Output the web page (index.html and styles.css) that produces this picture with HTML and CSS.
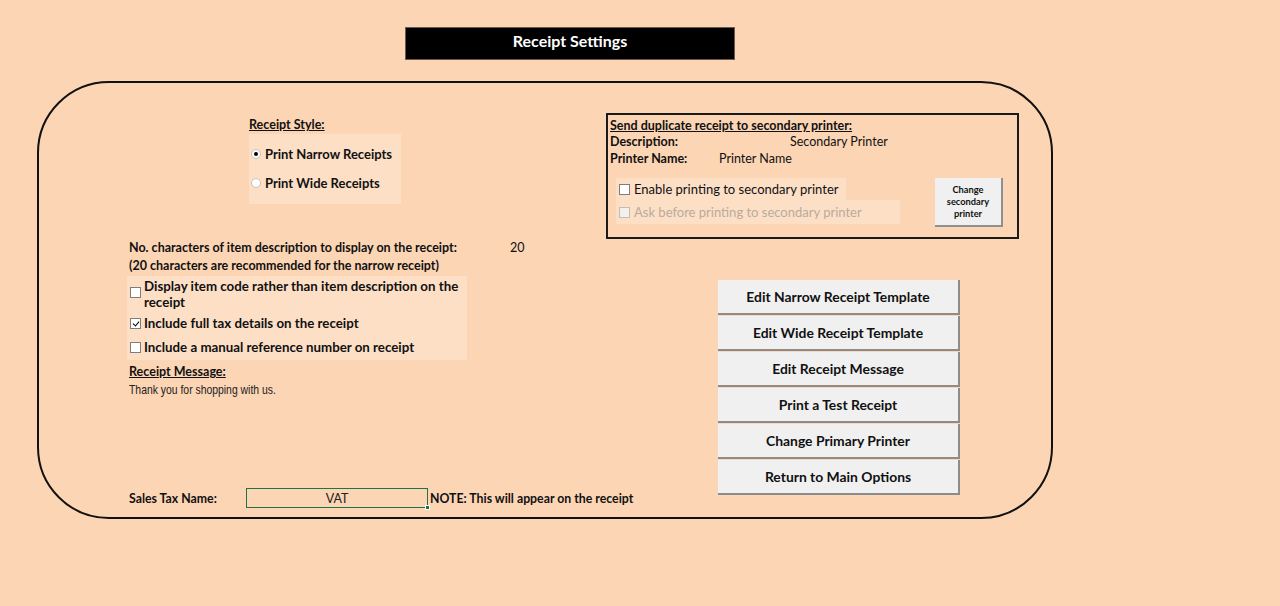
FILE: index.html
```html
<!DOCTYPE html>
<html lang="en">
<head>
<meta charset="utf-8">
<title>Receipt Settings</title>
<link rel="stylesheet" href="styles.css">
</head>
<body>
<div class="sheet">
  <div class="title-bar">Receipt Settings</div>

  <div class="panel">
    <div class="col-left">
      <div class="style-block">
        <div class="heading">Receipt Style:</div>
        <div class="radio-group">
          <label class="radio-row"><span class="radio on"></span>Print Narrow Receipts</label>
          <label class="radio-row"><span class="radio"></span>Print Wide Receipts</label>
        </div>
      </div>

      <div class="desc-block">
        <div class="desc-row">
          <span class="strong">No. characters of item description to display on the receipt:</span>
          <span class="desc-value">20</span>
        </div>
        <div class="strong">(20 characters are recommended for the narrow receipt)</div>
      </div>

      <div class="options">
        <label class="opt"><span class="box"></span><span class="opt-text">Display item code rather than item description on the receipt</span></label>
        <label class="opt"><span class="box checked"></span><span class="opt-text">Include full tax details on the receipt</span></label>
        <label class="opt"><span class="box"></span><span class="opt-text">Include a manual reference number on receipt</span></label>
      </div>

      <div class="heading msg-heading">Receipt Message:</div>
      <div class="msg-text">Thank you for shopping with us.</div>

      <div class="tax-row">
        <span class="tax-label">Sales Tax Name:</span>
        <span class="tax-cell">VAT<span class="handle"></span></span>
        <span class="tax-note">NOTE: This will appear on the receipt</span>
      </div>
    </div>

    <div class="col-right">
      <div class="secondary">
        <div class="heading">Send duplicate receipt to secondary printer:</div>
        <div class="sec-row"><span class="sec-label">Description:</span><span class="sec-desc">Secondary Printer</span></div>
        <div class="sec-row"><span class="sec-label">Printer Name:</span><span class="sec-name">Printer Name</span></div>
        <div class="sec-bottom">
          <div class="sec-checks">
            <label class="sec-check enable"><span class="box"></span>Enable printing to secondary printer</label>
            <label class="sec-check ask"><span class="box disabled"></span>Ask before printing to secondary printer</label>
          </div>
          <button class="small-btn">Change<br>secondary<br>printer</button>
        </div>
      </div>

      <div class="btn-stack">
        <button class="btn">Edit Narrow Receipt Template</button>
        <button class="btn">Edit Wide Receipt Template</button>
        <button class="btn">Edit Receipt Message</button>
        <button class="btn">Print a Test Receipt</button>
        <button class="btn">Change Primary Printer</button>
        <button class="btn">Return to Main Options</button>
      </div>
    </div>
  </div>
</div>
</body>
</html>
```
FILE: styles.css
```css
* { box-sizing: border-box; }

html, body {
  margin: 0;
  padding: 0;
  background: #fcd5b4;
}

body {
  font-family: Lato, "Open Sans", sans-serif;
  color: #111;
  font-size: 12.5px;
  width: 1280px;
  height: 606px;
  overflow: hidden;
}

.sheet {
  padding-top: 27px;
}

.title-bar {
  margin-left: 405px;
  width: 330px;
  height: 33px;
  padding-bottom: 6px;
  background: #000;
  color: #fff;
  font-weight: 700;
  font-size: 16px;
  display: flex;
  align-items: center;
  justify-content: center;
  border: 1px solid #6b5a4d;
}

.panel {
  margin-top: 21px;
  margin-left: 37px;
  width: 1016px;
  height: 438px;
  border: 2px solid #111;
  border-radius: 72px;
  display: flex;
}

/* left column */
.col-left {
  width: 567px;
  padding-left: 88px;
  display: flex;
  flex-direction: column;
}

.heading {
  font-weight: 700;
  text-decoration: underline;
  font-size: 12.5px;
  line-height: 14px;
}

.style-block {
  margin-left: 122px;
  margin-top: 35px;
}

.radio-group {
  margin-top: 2px;
  width: 152px;
  height: 70px;
  background: #fddfc6;
  padding-top: 12px;
  display: flex;
  flex-direction: column;
  gap: 13px;
}

.radio-row {
  display: flex;
  align-items: center;
  font-weight: 700;
  font-size: 13px;
  line-height: 16px;
  padding-left: 2px;
}

.radio {
  width: 10px;
  height: 10px;
  border-radius: 50%;
  background: #fff;
  border: 1px solid #c9c0b8;
  margin-right: 4px;
  position: relative;
  flex: none;
}

.radio.on::after {
  content: "";
  position: absolute;
  left: 2px;
  top: 2px;
  width: 4px;
  height: 4px;
  border-radius: 50%;
  background: #000;
}

.desc-block {
  margin-top: 35px;
  font-size: 12.5px;
  line-height: 18px;
}

.strong { font-weight: 700; }

.desc-row {
  display: flex;
  padding-left: 2px;
}

.desc-block > .strong { padding-left: 2px; }

.desc-value {
  margin-left: 53px;
  font-weight: 400;
}

.options {
  margin-top: 1px;
  width: 340px;
  height: 84px;
  background: #fddfc6;
  padding-top: 2px;
  display: flex;
  flex-direction: column;
}

.opt {
  display: flex;
  align-items: flex-start;
  font-weight: 700;
  font-size: 13.3px;
  line-height: 16px;
  padding-left: 3px;
}

.opt:nth-child(1) { height: 37px; }
.opt:nth-child(2) { height: 24px; }

.opt .box { margin-top: 3px; }
.opt:nth-child(1) .box { margin-top: 9px; }

.opt-text {
  width: 318px;
}

.box {
  width: 11px;
  height: 11px;
  background: #fff;
  border: 1px solid #7d7d7d;
  margin-right: 3px;
  flex: none;
  position: relative;
}

.box.checked::after {
  content: "";
  position: absolute;
  left: 3px;
  top: 1px;
  width: 3px;
  height: 5px;
  border: solid #000;
  border-width: 0 1.5px 1.5px 0;
  transform: rotate(40deg);
}

.box.disabled {
  background: #f2efec;
  border-color: #c3bdb7;
}

.msg-heading {
  margin-top: 5px;
  margin-left: 2px;
}

.msg-text {
  margin-top: 3px;
  margin-left: 2px;
  font-family: "Liberation Sans", Arial, sans-serif;
  font-size: 13px;
  color: #222;
  transform: scaleX(0.8);
  transform-origin: left center;
  white-space: nowrap;
}

.tax-row {
  margin-top: auto;
  margin-bottom: 9px;
  display: flex;
  align-items: center;
  font-size: 12.3px;
  white-space: nowrap;
}

.tax-label {
  font-weight: 700;
  width: 119px;
  padding-left: 2px;
  flex: none;
}

.tax-cell {
  width: 182px;
  height: 20px;
  border: 1.5px solid #217346;
  display: flex;
  align-items: center;
  justify-content: center;
  font-size: 12.5px;
  position: relative;
  color: #222;
  flex: none;
}

.handle {
  position: absolute;
  right: -3px;
  bottom: -3px;
  width: 5px;
  height: 5px;
  background: #217346;
  border: 1px solid #fff;
}

.tax-note {
  font-weight: 700;
  margin-left: 2px;
}

/* right column */
.col-right {
  flex: 1;
  display: flex;
  flex-direction: column;
}

.secondary {
  margin-top: 30px;
  width: 413px;
  height: 126px;
  border: 2px solid #1a1a1a;
  padding: 4px 0 0 2px;
  font-size: 12.5px;
}

.sec-row {
  display: flex;
  line-height: 17px;
}

.sec-label {
  font-weight: 700;
}

.sec-row:nth-of-type(2) .sec-label { width: 180px; }
.sec-row:nth-of-type(3) .sec-label { width: 109px; }

.sec-bottom {
  display: flex;
  margin-top: 11px;
  padding-left: 6px;
}

.sec-checks {
  display: flex;
  flex-direction: column;
}

.sec-check {
  display: flex;
  align-items: center;
  font-size: 13px;
  background: #fddfc6;
  height: 22px;
  padding-left: 3px;
}

.sec-check .box { margin-right: 4px; }

.sec-check.enable { width: 230px; }
.sec-check.ask { width: 284px; color: #b8ab9f; height: 24px; }

.small-btn {
  margin-left: 35px;
  width: 68px;
  height: 49px;
  font-family: Lato, sans-serif;
  font-weight: 700;
  font-size: 9.3px;
  line-height: 12px;
  color: #111;
  background: #f0f0f0;
  border: none;
  border-right: 2px solid #8f8f8f;
  border-bottom: 2px solid #8f8f8f;
  padding: 0;
}

.btn-stack {
  margin-top: 41px;
  margin-left: 112px;
  width: 242px;
  display: flex;
  flex-direction: column;
  gap: 1px;
}

.btn {
  height: 35px;
  background: #f0f0f0;
  border: none;
  border-right: 2px solid #8c8c8c;
  border-bottom: 2px solid #8c8c8c;
  font-family: Lato, sans-serif;
  font-weight: 700;
  font-size: 13.9px;
  color: #111;
  padding: 0;
}
```
